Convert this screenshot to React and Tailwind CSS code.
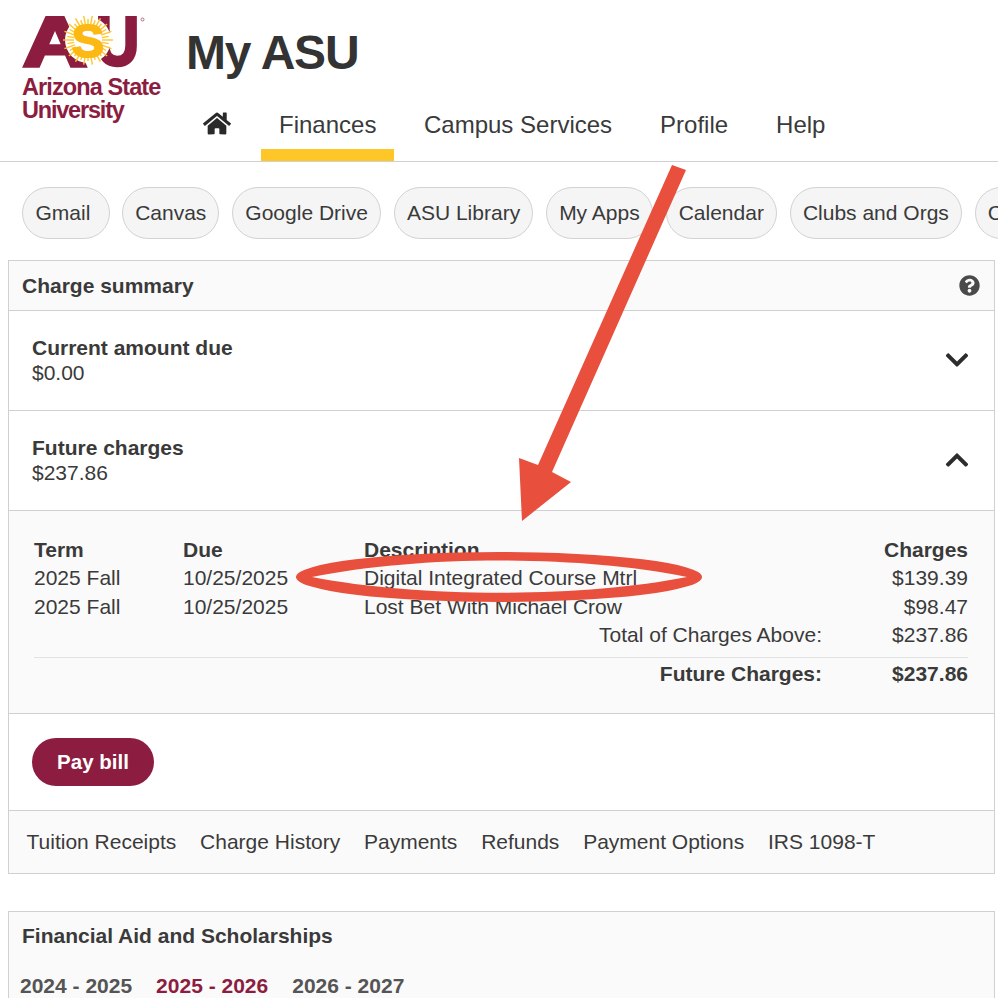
import React from "react";
import { FaHome, FaQuestionCircle, FaChevronDown, FaChevronUp } from "react-icons/fa";

const chips = ["Canvas", "Google Drive", "ASU Library", "My Apps", "Calendar", "Clubs and Orgs", "Campus"];
const nav = ["Campus Services", "Profile", "Help"];
const links = ["Tuition Receipts", "Charge History", "Payments", "Refunds", "Payment Options", "IRS 1098-T"];
const rays = Array.from({ length: 36 }, (_, i) => (i * Math.PI * 2) / 36);

function AsuMark() {
  return (
    <svg width="124" height="54" viewBox="0 0 124 54" className="block">
      <text x="1" y="50" fontFamily="Liberation Sans" fontWeight="700" fontSize="70" fill="#8c1d40" stroke="#8c1d40" strokeWidth="3.5" textLength="64" lengthAdjust="spacingAndGlyphs">A</text>
      <text x="74" y="49" fontFamily="Liberation Sans" fontWeight="700" fontSize="70" fill="#8c1d40" stroke="#8c1d40" strokeWidth="3.5" textLength="43" lengthAdjust="spacingAndGlyphs">U</text>
      <circle cx="66" cy="24" r="23" fill="#fff" />
      <g stroke="#ffc627" strokeWidth="1.4">
        {rays.map((a, i) => (
          <line key={i} x1={66 + Math.cos(a) * 14} y1={24 + Math.sin(a) * 14} x2={66 + Math.cos(a) * (i % 2 ? 21 : 25)} y2={24 + Math.sin(a) * (i % 2 ? 21 : 25)} />
        ))}
      </g>
      <text x="50" y="41" fontFamily="Liberation Sans" fontWeight="700" fontSize="46" fill="#fdb913" stroke="#fdb913" strokeWidth="2" textLength="32" lengthAdjust="spacingAndGlyphs">S</text>
      <circle cx="120.5" cy="3.5" r="1.5" fill="none" stroke="#8c1d40" strokeWidth="0.6" />
    </svg>
  );
}

function Row({ title, amount, up }) {
  const Icon = up ? FaChevronUp : FaChevronDown;
  return (
    <div className="flex h-[100px] items-center justify-between border-b-[1.5px] border-[#d0d0d0] bg-white pb-[2px] pl-[23px] pr-6">
      <div className="leading-[25px]">
        <div className="font-bold">{title}</div>
        <div>{amount}</div>
      </div>
      <Icon className="mt-[1px] h-[26px] w-[26px] text-[#2c2c2c]" />
    </div>
  );
}

export default function App() {
  return (
    <div className="relative h-[998px] w-[998px] overflow-hidden bg-white text-[21px] text-[#3a3a3a] [font-family:'Liberation_Sans',Arial,sans-serif]">
      <header className="flex h-[162px] border-b-[1.5px] border-[#d0d0d0]">
        <div className="w-[185px] shrink-0 pl-[22px] pt-[16px]">
          <AsuMark />
          <div className="mt-[6px] text-[23.5px] font-bold leading-[23px] tracking-[-0.9px] text-[#8c1d40]">
            <div className="whitespace-nowrap">Arizona State</div>
            <div className="tracking-[-1.2px]">University</div>
          </div>
        </div>
        <div className="flex flex-1 flex-col justify-between">
          <h1 className="pl-px pt-[24px] text-[48px] font-bold leading-[58px] tracking-[-1.2px] text-[#333]">My ASU</h1>
          <nav className="flex gap-3 text-[24px] leading-[28px]">
            <div className="flex h-[61px] items-start px-[18px] pt-[11px]">
              <FaHome className="h-[25px] w-[28px] text-[#2a2a2a]" />
            </div>
            <div className="h-[61px] border-b-[12px] border-[#ffc627] px-[18px] pt-[11px]">Finances</div>
            <div className="-ml-[0.4px] flex gap-3">
              {nav.map((n) => (
                <div key={n} className="h-[61px] whitespace-nowrap px-[18px] pt-[11px]">{n}</div>
              ))}
            </div>
          </nav>
        </div>
      </header>

      <div className="flex gap-[13px] overflow-hidden pl-[22px] pt-[25px]">
        <div className="-mr-[0.7px] flex h-[52px] shrink-0 items-center rounded-[26px] border-[1.5px] border-[#d2d2d2] bg-[#f5f5f5] pl-[12.5px] pr-[18.5px]">Gmail</div>
        {chips.map((c) => (
          <div key={c} className="flex h-[52px] shrink-0 items-center whitespace-nowrap rounded-[26px] border-[1.5px] border-[#d2d2d2] bg-[#f5f5f5] px-[12px]">
            {c}
          </div>
        ))}
      </div>

      <section className="ml-2 mt-[21px] w-[987px] border-[1.5px] border-[#d0d0d0]">
        <div className="flex h-[50px] items-center justify-between border-b-[1.5px] border-[#d0d0d0] bg-[#fafafa] pl-[13px] pr-[14.5px]">
          <span className="font-bold">Charge summary</span>
          <FaQuestionCircle className="h-[21px] w-[21px] text-[#4a4a4a]" />
        </div>
        <Row title="Current amount due" amount="$0.00" />
        <Row title="Future charges" amount="$237.86" up />
        <div className="h-[203px] border-b-[1.5px] border-[#d0d0d0] bg-[#fafafa] pl-[25px] pr-[26px] pt-[25px] leading-[28.4px]">
          <div className="grid grid-cols-[149px_181px_1fr_auto]">
            <div className="font-bold">Term</div>
            <div className="font-bold">Due</div>
            <div className="font-bold">Description</div>
            <div className="text-right font-bold">Charges</div>
            <div>2025 Fall</div>
            <div>10/25/2025</div>
            <div>Digital Integrated Course Mtrl</div>
            <div className="text-right">$139.39</div>
            <div>2025 Fall</div>
            <div>10/25/2025</div>
            <div>Lost Bet With Michael Crow</div>
            <div className="text-right">$98.47</div>
          </div>
          <div className="flex justify-end">
            <span>Total of Charges Above:</span>
            <span className="w-[146px] text-right">$237.86</span>
          </div>
          <div className="mt-[7px] flex justify-end border-t border-[#e2e2e2] pt-[2px] font-bold">
            <span>Future Charges:</span>
            <span className="w-[146px] text-right">$237.86</span>
          </div>
        </div>
        <div className="flex h-[97px] items-center border-b-[1.5px] border-[#d0d0d0] bg-white pl-[23px]">
          <button className="flex h-[48px] w-[122px] items-center justify-center rounded-[24px] bg-[#8c1d40] text-[20.5px] font-bold text-white">Pay bill</button>
        </div>
        <div className="flex h-[62px] items-center gap-[23.8px] bg-[#fafafa] pl-[17.5px]">
          {links.map((l) => (
            <span key={l} className="whitespace-nowrap">{l}</span>
          ))}
        </div>
      </section>

      <section className="ml-2 mt-[37px] h-[120px] w-[987px] border-[1.5px] border-[#d0d0d0] bg-[#fafafa]">
        <div className="pl-[13px] pt-[11px] font-bold leading-[26px]">Financial Aid and Scholarships</div>
        <div className="flex gap-6 pl-[11px] pt-[24px] font-bold leading-[26px] text-[#555]">
          <span>2024 - 2025</span>
          <span className="text-[#8c1d40]">2025 - 2026</span>
          <span>2026 - 2027</span>
        </div>
      </section>

      <svg className="pointer-events-none absolute left-0 top-0" width="998" height="998" viewBox="0 0 998 998">
        <polygon points="672,165 686,170 552,472 571,482 522,521 519,458 538,465" fill="#e94f3d" />
        <path fillRule="evenodd" fill="#e94f3d" d="M296 577a203 25 0 1 0 406 0a203 25 0 1 0 -406 0zM312 577C420 555 580 555 687 577C580 598 420 598 312 577z" />
      </svg>
    </div>
  );
}
